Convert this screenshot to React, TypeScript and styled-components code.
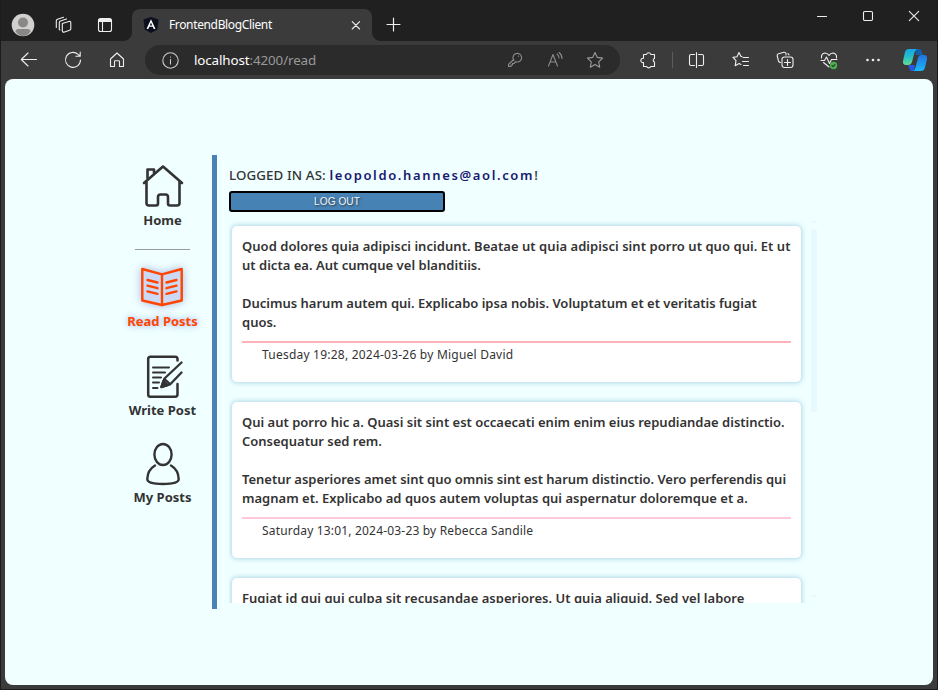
import React from 'react';
import styled, { createGlobalStyle, css } from 'styled-components';

const GlobalStyle = createGlobalStyle`
  *, *::before, *::after { box-sizing: border-box; }
  html, body { margin: 0; padding: 0; }
  body { width: 938px; height: 690px; overflow: hidden; background: #1b1b1b; font-family: "Noto Sans", sans-serif; }
  svg { display: block; flex: none; }
`;

const Window = styled.div`
  display: flex;
  flex-direction: column;
  width: 938px;
  height: 690px;
  background: #3b3b3b;
  border: solid #1c1c1c;
  border-width: 0 1px 1px;
`;

const TabStrip = styled.header`
  display: flex;
  height: 41px;
  background: #202020;
`;

const StripTools = styled.div`
  display: flex;
  align-items: center;
  width: 131px;
  padding: 8px 0 0 10px;
  gap: 19px;
  svg:last-child { margin-left: 5px; }
`;

const Tab = styled.div`
  position: relative;
  display: flex;
  align-items: center;
  width: 240px;
  height: 32px;
  margin-top: 9px;
  padding: 0 10px 0 11px;
  background: #3b3b3b;
  border-radius: 8px 8px 0 0;
  &::before, &::after {
    content: '';
    position: absolute;
    bottom: 0;
    width: 8px;
    height: 8px;
  }
  &::before { left: -8px; background: radial-gradient(circle at 0 0, #202020 7.5px, #3b3b3b 8px); }
  &::after { right: -8px; background: radial-gradient(circle at 100% 0, #202020 7.5px, #3b3b3b 8px); }
`;

const TabTitle = styled.span`
  flex: 1;
  margin-left: 10px;
  color: #fff;
  font-size: 12px;
  letter-spacing: -0.36px;
  line-height: 16px;
  white-space: nowrap;
`;

const NewTab = styled.div`
  padding: 17px 0 0 14px;
  flex: 1;
`;

const Controls = styled.div`
  display: flex;
  gap: 34px;
  padding: 10px 17px 0 0;
  height: 24px;
`;

const Toolbar = styled.nav`
  display: flex;
  align-items: center;
  height: 38px;
  padding-left: 18px;
`;

const NavButtons = styled.div`
  display: flex;
  gap: 24px;
  width: 126px;
`;

const AddressBar = styled.div`
  display: flex;
  align-items: center;
  width: 475px;
  height: 30px;
  padding: 0 15px 0 16px;
  border-radius: 15px;
  background: #2b2b2b;
`;

const Url = styled.span`
  flex: 1;
  margin-left: 14px;
  color: #999;
  font-size: 13.4px;
  line-height: 18px;
  letter-spacing: -0.12px;
  white-space: nowrap;
`;

const Host = styled.span`
  color: #fff;
`;

const AddressActions = styled.div`
  display: flex;
  gap: 20px;
`;

const Extensions = styled.div`
  display: flex;
  align-items: center;
  margin-left: 18px;
`;

const Divider = styled.div`
  width: 1px;
  height: 16px;
  margin: 0 14px 0 14px;
  background: #5c5c5c;
`;

const ToolRow = styled.div`
  display: flex;
  align-items: center;
  gap: 24px;
`;

const CopilotSlot = styled.div`
  margin-left: 19px;
`;

const Page = styled.main`
  display: flex;
  height: 606px;
  margin: 0 4px;
  padding: 76px 0 0 116px;
  border-radius: 8px;
  background: #f0ffff;
  overflow: hidden;
  color: #333;
`;

const Sidebar = styled.aside`
  display: flex;
  flex-direction: column;
  align-items: center;
  width: 96px;
  height: 454px;
  padding: 9px 8px 0 0;
  border-right: 5px solid #4682b4;
`;

const NavItem = styled.a<{ $active?: boolean; $gap: number }>`
  display: flex;
  flex-direction: column;
  align-items: center;
  margin-bottom: ${p => p.$gap}px;
  color: #333;
  ${p => p.$active && css`
    color: #ff4500;
    text-shadow: 0 0 6px rgba(65, 105, 225, .55);
    svg { filter: drop-shadow(0 0 4px rgba(90, 105, 200, .5)); }
  `}
`;

const NavLabel = styled.span<{ $lift: number }>`
  margin-top: ${p => p.$lift}px;
  font-size: 13px;
  line-height: 20px;
  font-weight: 700;
  letter-spacing: 0;
  white-space: nowrap;
`;

const Rule = styled.hr`
  width: 55px;
  height: 1px;
  margin: 0 0 17px;
  border: 0;
  background: #9a9a9a;
`;

const Content = styled.section`
  display: flex;
  flex-direction: column;
  width: 605px;
  padding: 11px 0 0 12px;
`;

const Status = styled.p`
  margin: 0 0 7px;
  font-size: 13.3px;
  line-height: 18px;
  letter-spacing: 0.12px;
  font-weight: 500;
  white-space: nowrap;
`;

const Email = styled.b`
  color: #191970;
  font-weight: 600;
  font-size: 13px;
  letter-spacing: 1.64px;
`;

const LogOut = styled.button`
  width: 216px;
  height: 21px;
  padding: 0;
  border: 2px solid #000;
  border-radius: 3px;
  background: #4682b4;
  color: #f0f8ff;
  font: 10.2px/16px "Liberation Sans", sans-serif;
  text-shadow: 1px 1px 2px #333;
`;

const Feed = styled.div`
  display: flex;
  width: 592px;
  height: 391px;
`;

const Posts = styled.div`
  display: flex;
  flex-direction: column;
  gap: 20px;
  width: 577px;
  padding: 14px 5px 0 3px;
  overflow: hidden;
`;

const Card = styled.article`
  flex: none;
  height: 156px;
  padding: 11px 10px 0;
  border-radius: 5px;
  background: #fff;
  box-shadow: 0 0 5px 1px #add8e6;
`;

const Line = styled.p<{ $track: number }>`
  height: 19px;
  margin: 0;
  font-size: 13px;
  line-height: 19px;
  font-weight: 600;
  letter-spacing: ${p => p.$track}px;
  white-space: pre;
`;

const Byline = styled.footer<{ $color: string; $track: number }>`
  margin-top: 9px;
  padding: 3px 0 0 20px;
  border-top: 2px solid ${p => p.$color};
  font-size: 12px;
  line-height: 17px;
  letter-spacing: ${p => p.$track}px;
  white-space: nowrap;
`;

const ScrollRail = styled.div`
  display: flex;
  flex-direction: column;
  align-items: center;
  width: 14px;
  padding: 8px 0 5px 2px;
`;

const Thumb = styled.div`
  width: 6px;
  height: 183px;
  margin: 6px 0 auto;
  border-radius: 3px;
  background: #e6f9fc;
`;

const Ic = ({ w = 20, h = 20, c = '#eee', s = 1.1, children }: { w?: number; h?: number; c?: string; s?: number; children: React.ReactNode }) => (
  <svg width={w} height={h} viewBox={`0 0 ${w} ${h}`} fill="none" stroke={c} strokeWidth={s} strokeLinecap="round" strokeLinejoin="round">{children}</svg>
);

const star = 'M9 1.5l2.3 4.9 5.3.7-3.9 3.7 1 5.4L9 13.6l-4.7 2.6 1-5.4L1.4 7.1l5.3-.7z';

const HomeIcon = () => (
  <Ic w={42} h={44} c="currentColor" s={2.6}>
    <path d="M2 19L21 2.5 40 19M4.5 17V39q0 2.5 2.5 2.5h7q2 0 2-2V33q0-2.500 2.500-2.500h5q2.500 0 2.500 2.500v6.500q0 2 2 2h7q2.500 0 2.500-2.500V17" />
    <path d="M5.500 14V5.500H12V9" />
  </Ic>
);

const BookIcon = () => (
  <Ic w={42} h={40} c="currentColor" s={2.4}>
    <path d="M1.300 2L21 7.300 40.700 2V33.500L21 38 1.300 33.500z" fill="#cbd9f4" />
    <path d="M21 7.300V38M6.500 13l10 2.500M6.500 18.700l10 2.500M6.500 24.400l10 2.500M35.500 13l-10 2.500M35.500 18.700l-10 2.500M35.500 24.400l-10 2.500" />
  </Ic>
);

const WriteIcon = () => (
  <Ic w={42} h={44} c="currentColor" s={2.5}>
    <g transform="translate(5.500 0)">
      <path d="M31 5.500V4q0-2.300-2.300-2.300H4Q1.700 1.700 1.700 4V39.500q0 2.300 2.300 2.300H28.500q2.500 0 2.500-2.500V29" />
      <path d="M6.500 12.500H22.500M6.500 17.500H18.500M6.500 22.500H14.500M6.500 27.500H12.500M6.500 33H11" strokeWidth="2" />
      <path d="M35 7.500L18 23.500 15 32l8.500-2.500L35 17.500M18 24l5.500 5" strokeWidth="2.300" />
      <path d="M17 26l4 4-6 2z" fill="currentColor" />
    </g>
  </Ic>
);

const PersonIcon = () => (
  <Ic w={34} h={44} c="currentColor" s={2.4}>
    <ellipse cx="17" cy="12.500" rx="8.600" ry="10.500" />
    <path d="M9 23.500C4 26.500 1.500 31 1.300 37q0 5 15.700 5t15.700-5C32.500 31 30 26.500 25 23.500" />
  </Ic>
);

type Post = { lines: [string, number][]; byline: string; track: number; color: string };

const posts: Post[] = [
  {
    lines: [
      ['Quod dolores quia adipisci incidunt. Beatae ut quia adipisci sint porro ut quo qui. Et ut', 0.05],
      ['ut dicta ea. Aut cumque vel blanditiis.', 0.02],
      ['', 0],
      ['Ducimus harum autem qui. Explicabo ipsa nobis. Voluptatum et et veritatis fugiat', 0],
      ['quos.', 0],
    ],
    byline: 'Tuesday 19:28, 2024-03-26 by Miguel David',
    track: 0.22,
    color: '#ffb3b8',
  },
  {
    lines: [
      ['Qui aut porro hic a. Quasi sit sint est occaecati enim enim eius repudiandae distinctio.', 0],
      ['Consequatur sed rem.', 0],
      ['', 0],
      ['Tenetur asperiores amet sint quo omnis sint est harum distinctio. Vero perferendis qui', -0.028],
      ['magnam et. Explicabo ad quos autem voluptas qui aspernatur doloremque et a.', 0.01],
    ],
    byline: 'Saturday 13:01, 2024-03-23 by Rebecca Sandile',
    track: 0.18,
    color: '#ffc8dc',
  },
  {
    lines: [['Fugiat id qui qui culpa sit recusandae asperiores. Ut quia aliquid. Sed vel labore', 0.025]],
    byline: '',
    track: 0,
    color: 'transparent',
  },
];

export default function App() {
  return (
    <>
      <GlobalStyle />
      <Window>
        <TabStrip>
          <StripTools>
            <svg width="24" height="24" viewBox="0 0 24 24">
              <circle cx="12" cy="12" r="11.300" fill="#d2d0ce" />
              <circle cx="12" cy="9.500" r="5" fill="#8a8886" />
              <path d="M4.500 18.500q0-2.500 3-2.500h9q3 0 3 2.500Q16.500 23 12 23t-7.500-4.500z" fill="#8a8886" />
            </svg>
            <Ic w={18} h={18}>
              <path d="M8.300 7.500l6.500-2q2-.6 2 1.300v6q0 1-1.200 1.400l-5 1.700q-2.300.8-2.300-1.200zM5.300 13.500V6.500q0-1 1.200-1.500l6-2.100M5.300 13.500l.6.500M2.300 11.500V4.800q0-1 1.200-1.500l6-2.100" />
            </Ic>
            <Ic w={18} h={18}>
              <rect x="2.500" y="2.500" width="13" height="13" rx="2" />
              <path d="M3 4.500h12M6.500 6v9" />
              <path d="M3 3.500h12v2H3z" fill="#eee" />
            </Ic>
          </StripTools>
          <Tab>
            <svg width="16" height="16" viewBox="0 0 16 16">
              <path d="M8 0l7.500 2.600-1.100 10L8 16l-6.400-3.400L.5 2.600z" fill="#0b101c" />
              <path d="M8 2.200L3.500 12h1.800l.9-2.200h3.600l.9 2.200h1.800zm0 3.200l1.200 3H6.800z" fill="#fff" />
            </svg>
            <TabTitle>FrontendBlogClient</TabTitle>
            <Ic w={12} h={12}><path d="M2.200 2.600l7.400 7.400M9.600 2.600l-7.400 7.400" /></Ic>
          </Tab>
          <NewTab><Ic w={15} h={15} s={1.2}><path d="M7.500 1v13M1 7.500h13" /></Ic></NewTab>
          <Controls>
            <Ic w={12} h={12}><path d="M1.500 6.500h9" /></Ic>
            <Ic w={12} h={12}><rect x="1.500" y="1.500" width="9" height="9" rx="1.200" /></Ic>
            <Ic w={12} h={12}><path d="M1.300 1.300l9.400 9.400M10.700 1.300L1.300 10.700" /></Ic>
          </Controls>
        </TabStrip>
        <Toolbar>
          <NavButtons>
            <Ic><path d="M17.500 9.500H2.500M9 3L2.300 9.500 9 16" /></Ic>
            <Ic><path d="M17.500 10A7.500 7.500 0 1 1 15 4.300L17 6M17.200 2v4.300h-4.300" /></Ic>
            <Ic><path d="M3.500 9L10 3l6.500 6v7.500h-4v-5q0-.8-.8-.8H8.300q-.8 0-.8.8v5h-4z" /></Ic>
          </NavButtons>
          <AddressBar>
            <Ic w={19} h={19} c="#ccc"><circle cx="9.500" cy="9.500" r="7.700" /><path d="M9.500 8.500v4.500M9.500 6v.1" /></Ic>
            <Url><Host>localhost</Host>:4200/read</Url>
            <AddressActions>
              <Ic c="#8c8c8c"><path d="M9 10.500a4.300 4.300 0 1 1 3 1.500l-1.300-.3L9 13.500H7.500V15H6v1.500H3.500V14.500L8.700 9.500M13.500 6v.3" /></Ic>
              <Ic c="#8c8c8c"><path d="M3.500 16L8 4.500 12.500 16M5 12h6M12 4q2 1.500 2 4M14 2.500q3 2 3 6" /></Ic>
              <Ic c="#9a9a9a"><g transform="translate(1 1)"><path d={star} /></g></Ic>
            </AddressActions>
          </AddressBar>
          <Extensions>
            <Ic><path d="M5.500 4.500h3a2.200 2.200 0 0 1 4.300 0h3.700v4a1.900 1.900 0 0 0 0 3.600v4.400H12.700a2.200 2.200 0 0 1-4.100 0H5.500V12.600a2.200 2.200 0 1 1 0-4.300z" /></Ic>
            <Divider />
            <ToolRow>
              <Ic><path d="M7.500 4.500H4q-1.500 0-1.500 1.500v8q0 1.500 1.500 1.500H7.500M11.500 4.500h3.500q1.500 0 1.500 1.500v8q0 1.500-1.500 1.500H11.500M9.500 2.500v15" /></Ic>
              <Ic><path d="M11 6.500H10L8 2.500 6 6.800l-4 .6 3 3.300-.8 5L8 13.500l2 1M12 7.500h5.500M11.500 11.500h6M12.500 15.500h5" /></Ic>
              <Ic><rect x="7" y="7" width="11" height="10.500" rx="2.500" /><path d="M12.500 9.500v6M9.500 12.500h6M5.500 12.500q-1.500 0-2-1.500L2.200 6q-.4-1.800 1.300-2.300L9 2.300Q10.500 2 11 3.500V5M14 5l-1-1.500" /></Ic>
              <Ic>
                <path d="M2.500 8Q2 3.500 6 3q2.500 0 4 2.500Q11.500 3 14 3q4 .5 3.500 5M2 10.500h3.500L7.500 7l3 6.500 2-4H18M4.500 12.500L10 17" />
                <circle cx="14.500" cy="15.500" r="3.700" fill="#4cae4f" stroke="none" /><path d="M13 15.500l1 1.200 2-2.200" stroke="#173d18" />
              </Ic>
              <Ic><g fill="#eee" stroke="none"><circle cx="4.500" cy="10" r="1.300" /><circle cx="10" cy="10" r="1.300" /><circle cx="15.500" cy="10" r="1.300" /></g></Ic>
            </ToolRow>
            <CopilotSlot>
              <svg width="26" height="24" viewBox="0 0 26 24">
                <defs>
                  <linearGradient id="left" x1="0" y1="0" x2="0" y2="1"><stop stopColor="#18a4ec" /><stop offset=".5" stopColor="#25bfc5" /><stop offset="1" stopColor="#67dd8f" /></linearGradient>
                  <linearGradient id="right" x1="0" y1="0" x2="0" y2="1"><stop stopColor="#2272df" /><stop offset="1" stopColor="#19bafa" /></linearGradient>
                </defs>
                <path d="M13 1h4q2 0 2.600 2L21 7h-7z" fill="#1260a8" />
                <path d="M6 17h7l-1 6H9.500Q8 23 7.300 20.500z" fill="#2459e5" />
                <path d="M7 1h8q-2 1-2.700 4L10 14q-1 3-4 3H4q-3.500 0-3-4L3 4q.8-3 4-3z" fill="url(#left)" />
                <path d="M19 7h3q3.500 0 3 4l-2 8.500Q22 23 19 23h-8q2-1 2.700-4L16 10q.8-3 3-3z" fill="url(#right)" />
              </svg>
            </CopilotSlot>
          </Extensions>
        </Toolbar>
        <Page>
          <Sidebar>
            <NavItem $gap={19}><HomeIcon /><NavLabel $lift={2}>Home</NavLabel></NavItem>
            <Rule />
            <NavItem $active $gap={24}><BookIcon /><NavLabel $lift={4}>Read Posts</NavLabel></NavItem>
            <NavItem $gap={22}><WriteIcon /><NavLabel $lift={1}>Write Post</NavLabel></NavItem>
            <NavItem $gap={0}><PersonIcon /><NavLabel $lift={1}>My Posts</NavLabel></NavItem>
          </Sidebar>
          <Content>
            <Status>LOGGED IN AS: <Email>leopoldo.hannes@aol.com</Email>!</Status>
            <LogOut>LOG OUT</LogOut>
            <Feed>
              <Posts>
                {posts.map(post => (
                  <Card key={post.lines[0][0]}>
                    {post.lines.map(([text, track], i) => <Line key={i} $track={track}>{text}</Line>)}
                    <Byline $color={post.color} $track={post.track}>{post.byline}</Byline>
                  </Card>
                ))}
              </Posts>
              <ScrollRail>
                <svg width="6" height="3" viewBox="0 0 6 3"><path d="M3 0l3 3H0z" fill="#e6f9fc" /></svg>
                <Thumb />
                <svg width="6" height="3" viewBox="0 0 6 3"><path d="M3 3l3-3H0z" fill="#e6f9fc" /></svg>
              </ScrollRail>
            </Feed>
          </Content>
        </Page>
      </Window>
    </>
  );
}
